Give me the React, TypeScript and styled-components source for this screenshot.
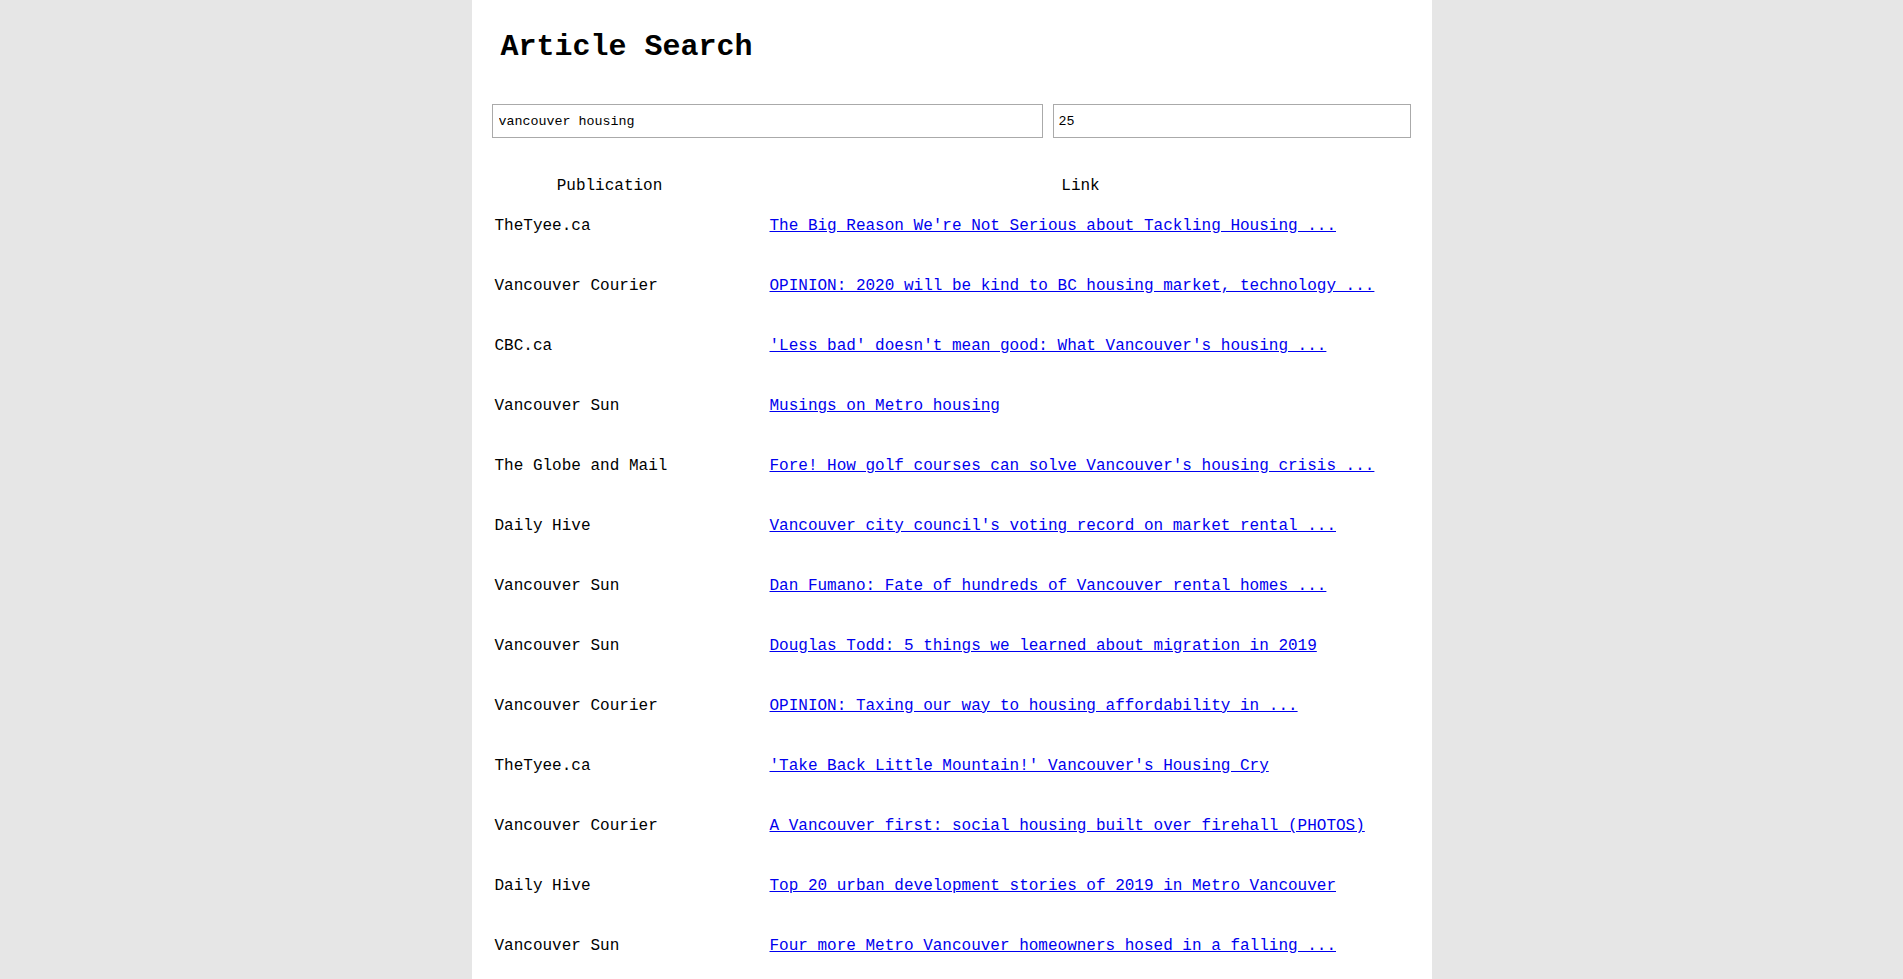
import React from "react";
import styled, { createGlobalStyle } from "styled-components";

interface Article {
    publication: string;
    title: string;
}

const articles: Article[] = [
    { publication: "TheTyee.ca", title: "The Big Reason We're Not Serious about Tackling Housing ..." },
    { publication: "Vancouver Courier", title: "OPINION: 2020 will be kind to BC housing market, technology ..." },
    { publication: "CBC.ca", title: "'Less bad' doesn't mean good: What Vancouver's housing ..." },
    { publication: "Vancouver Sun", title: "Musings on Metro housing" },
    { publication: "The Globe and Mail", title: "Fore! How golf courses can solve Vancouver's housing crisis ..." },
    { publication: "Daily Hive", title: "Vancouver city council's voting record on market rental ..." },
    { publication: "Vancouver Sun", title: "Dan Fumano: Fate of hundreds of Vancouver rental homes ..." },
    { publication: "Vancouver Sun", title: "Douglas Todd: 5 things we learned about migration in 2019" },
    { publication: "Vancouver Courier", title: "OPINION: Taxing our way to housing affordability in ..." },
    { publication: "TheTyee.ca", title: "'Take Back Little Mountain!' Vancouver's Housing Cry" },
    { publication: "Vancouver Courier", title: "A Vancouver first: social housing built over firehall (PHOTOS)" },
    { publication: "Daily Hive", title: "Top 20 urban development stories of 2019 in Metro Vancouver" },
    { publication: "Vancouver Sun", title: "Four more Metro Vancouver homeowners hosed in a falling ..." },
];

const GlobalStyle = createGlobalStyle`
    html, body {
        margin: 0;
        padding: 0;
        background: #e6e6e6;
        overflow: hidden;
    }
    body {
        font-family: "Liberation Mono", "Courier New", monospace;
        color: #000;
    }
`;

export default function App() {
    return (
        <>
            <GlobalStyle />
            <Page>
                <Panel>
                    <Title>Article Search</Title>
                    <SearchBar>
                        <QueryInput type="text" defaultValue="vancouver housing" />
                        <CountInput type="text" defaultValue="25" />
                    </SearchBar>
                    <Results>
                        <HeadCell $col="pub">Publication</HeadCell>
                        <HeadCell $col="link">Link</HeadCell>
                        {articles.map((a, i) => (
                            <React.Fragment key={i}>
                                <PubCell>{a.publication}</PubCell>
                                <LinkCell>
                                    <ArticleLink href="#">{a.title}</ArticleLink>
                                </LinkCell>
                            </React.Fragment>
                        ))}
                    </Results>
                </Panel>
            </Page>
        </>
    );
}

const Page = styled.div`
    display: flex;
    justify-content: center;
    min-height: 100vh;
`;

const Panel = styled.main`
    width: 960px;
    box-sizing: border-box;
    min-height: 100vh;
    background: #fff;
    padding: 0 20px;
    display: flex;
    flex-direction: column;
`;

const Title = styled.h1`
    margin: 30px 0 40px 9px;
    font-size: 30px;
    line-height: 34px;
    font-weight: bold;
`;

const SearchBar = styled.div`
    display: flex;
    gap: 10px;
    height: 34px;
`;

const Field = styled.input`
    box-sizing: border-box;
    height: 34px;
    border: 1px solid #aaaaaa;
    border-radius: 0;
    padding: 0 6px;
    font-family: "Liberation Mono", "Courier New", monospace;
    font-size: 13.333px;
    color: #000;
    background: #fff;
    outline: none;
`;

const QueryInput = styled(Field)`
    width: 551px;
`;

const CountInput = styled(Field)`
    width: 358px;
    padding-left: 5px;
`;

const Results = styled.div`
    display: grid;
    grid-template-columns: 278px 1fr;
    margin-top: 38px;
    font-size: 16px;
`;

const HeadCell = styled.div<{ $col: "pub" | "link" }>`
    text-align: center;
    line-height: 20px;
    height: 20px;
    padding-right: ${(p) => (p.$col === "pub" ? "42px" : "20px")};
`;

const PubCell = styled.div`
    height: 60px;
    display: flex;
    align-items: center;
    padding-left: 3px;
    white-space: nowrap;
`;

const LinkCell = styled.div`
    height: 60px;
    display: flex;
    align-items: center;
    white-space: nowrap;
`;

const ArticleLink = styled.a`
    color: #0000ee;
    text-decoration: underline;
`;
